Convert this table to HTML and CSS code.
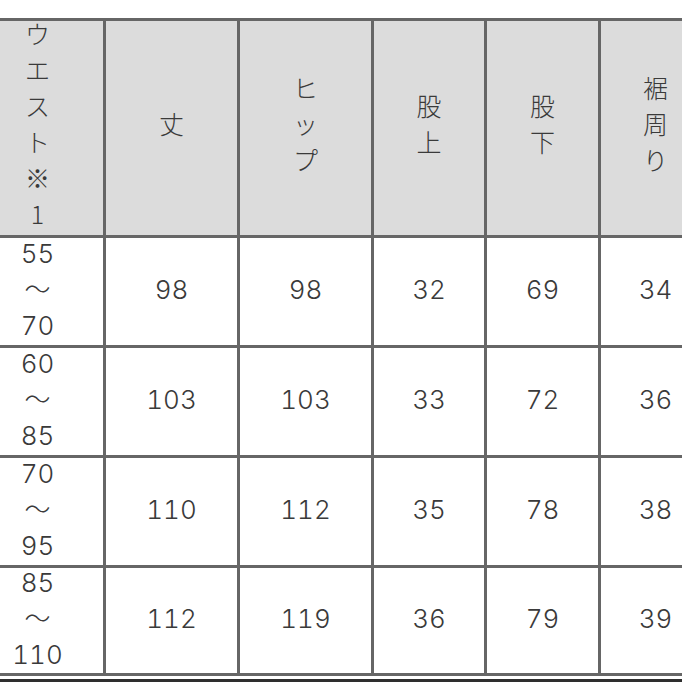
FILE: index.html
```html
<!DOCTYPE html>
<html lang="ja">
<head>
<meta charset="utf-8">
<link rel="stylesheet" href="styles.css">
</head>
<body>
<div class="sheet">
  <div class="size-table">
    <div class="cell head"><span>ウ</span><span>エ</span><span>ス</span><span>ト</span><span>※</span><span>1</span></div>
    <div class="cell head"><span>丈</span></div>
    <div class="cell head"><span>ヒ</span><span>ッ</span><span>プ</span></div>
    <div class="cell head"><span>股</span><span>上</span></div>
    <div class="cell head"><span>股</span><span>下</span></div>
    <div class="cell head"><span>裾</span><span>周</span><span>り</span></div>

    <div class="cell"><span>55</span><span>〜</span><span>70</span></div>
    <div class="cell"><span>98</span></div>
    <div class="cell"><span>98</span></div>
    <div class="cell"><span>32</span></div>
    <div class="cell"><span>69</span></div>
    <div class="cell"><span>34</span></div>

    <div class="cell"><span>60</span><span>〜</span><span>85</span></div>
    <div class="cell"><span>103</span></div>
    <div class="cell"><span>103</span></div>
    <div class="cell"><span>33</span></div>
    <div class="cell"><span>72</span></div>
    <div class="cell"><span>36</span></div>

    <div class="cell"><span>70</span><span>〜</span><span>95</span></div>
    <div class="cell"><span>110</span></div>
    <div class="cell"><span>112</span></div>
    <div class="cell"><span>35</span></div>
    <div class="cell"><span>78</span></div>
    <div class="cell"><span>38</span></div>

    <div class="cell"><span>85</span><span>〜</span><span>110</span></div>
    <div class="cell"><span>112</span></div>
    <div class="cell"><span>119</span></div>
    <div class="cell"><span>36</span></div>
    <div class="cell"><span>79</span></div>
    <div class="cell"><span>39</span></div>
  </div>
  <div class="next-rule"></div>
</div>
</body>
</html>
```

FILE: styles.css
```css
html, body {
  margin: 0;
  padding: 0;
  background: #ffffff;
  overflow: hidden;
  width: 682px;
  height: 682px;
}

.sheet {
  padding-top: 18px;
  margin-left: -31px;
  width: 744px;
}

.size-table {
  display: grid;
  grid-template-columns: 131px 131px 131px 110px 111px 109px;
  grid-template-rows: 214px 107px 107px 107px 105px;
  gap: 3px;
  padding: 3px;
  background: #666666;
  width: 744px;
  box-sizing: border-box;
}

.cell {
  background: #ffffff;
  display: flex;
  flex-direction: column;
  align-items: center;
  justify-content: center;
  padding-bottom: 4px;
  box-sizing: border-box;
  font-family: "Inter", "Noto Sans CJK JP", sans-serif;
  font-weight: 300;
  font-size: 26px;
  line-height: 36px;
  font-variant-numeric: tabular-nums;
  color: #3a3a3a;
}

.cell span {
  display: block;
}

.head {
  background: #dcdcdc;
  font-family: "Noto Sans CJK JP", sans-serif;
  font-size: 25px;
  padding-bottom: 10px;
}

.next-rule {
  margin-top: 3px;
  height: 3px;
  background: #2e2e2e;
}
```
